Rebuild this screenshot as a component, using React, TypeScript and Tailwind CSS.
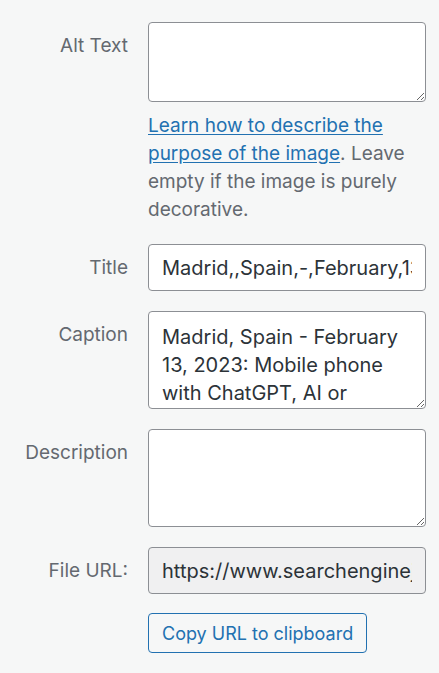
import React from "react";

const font = { fontFamily: "Inter, 'Noto Sans', sans-serif" };

function Row({ label, children }: { label: string; children: React.ReactNode }) {
  return (
    <div className="flex gap-5">
      <div className="w-[128px] shrink-0 pt-[10px] text-right text-[19px] leading-[28px] text-[#646970]">{label}</div>
      <div className="w-[278px] shrink-0">{children}</div>
    </div>
  );
}

export default function App() {
  return (
    <div className="min-h-[673px] w-[439px] bg-[#f6f7f7] pt-[22px]" style={font}>
      <div className="flex flex-col gap-5">
        <Row label="Alt Text">
          <textarea
            className="block h-[80px] w-full resize-y overflow-hidden rounded-[4px] border border-[#8c8f94] bg-white px-[13px] py-[10px] text-[20px] leading-[28px] text-[#2c3338] outline-none"
            defaultValue=""
          />
          <p className="mt-[10px] text-[19px] leading-[28px] text-[#646970]">
            <a href="#" className="text-[#2271b1] underline underline-offset-2">
              Learn how to describe the purpose of the image
            </a>
            . Leave empty if the image is purely decorative.
          </p>
        </Row>
        <Row label="Title">
          <input
            readOnly
            className="block h-[47px] w-full rounded-[4px] border border-[#8c8f94] bg-white px-[13px] text-[20px] text-[#2c3338] outline-none"
            value="Madrid,,Spain,-,February,13,,2023:,Mobile,phone"
          />
        </Row>
        <Row label="Caption">
          <textarea
            readOnly
            className="block h-[98px] w-full resize-y overflow-hidden rounded-[4px] border border-[#8c8f94] bg-white px-[13px] py-[11px] text-[20px] leading-[28px] text-[#2c3338] outline-none"
            value="Madrid, Spain - February 13, 2023: Mobile phone with ChatGPT, AI or artificial intelligence chat on the screen."
          />
        </Row>
        <Row label="Description">
          <textarea
            className="block h-[98px] w-full resize-y overflow-hidden rounded-[4px] border border-[#8c8f94] bg-white px-[13px] py-[11px] text-[20px] leading-[28px] text-[#2c3338] outline-none"
            defaultValue=""
          />
        </Row>
        <Row label="File URL:">
          <input
            readOnly
            className="block h-[47px] w-full rounded-[4px] border border-[#8c8f94] bg-[#f0f0f1] px-[13px] text-[20px] text-[#2c3338] outline-none"
            value="https://www.searchenginejournal.com/wp-content/uploads/2023/chatgpt.jpg"
          />
          <button className="mt-[19px] h-[40px] rounded-[4px] border border-[#2271b1] bg-[#f6f7f7] px-[13px] text-[18px] text-[#2271b1]">
            Copy URL to clipboard
          </button>
        </Row>
      </div>
    </div>
  );
}
